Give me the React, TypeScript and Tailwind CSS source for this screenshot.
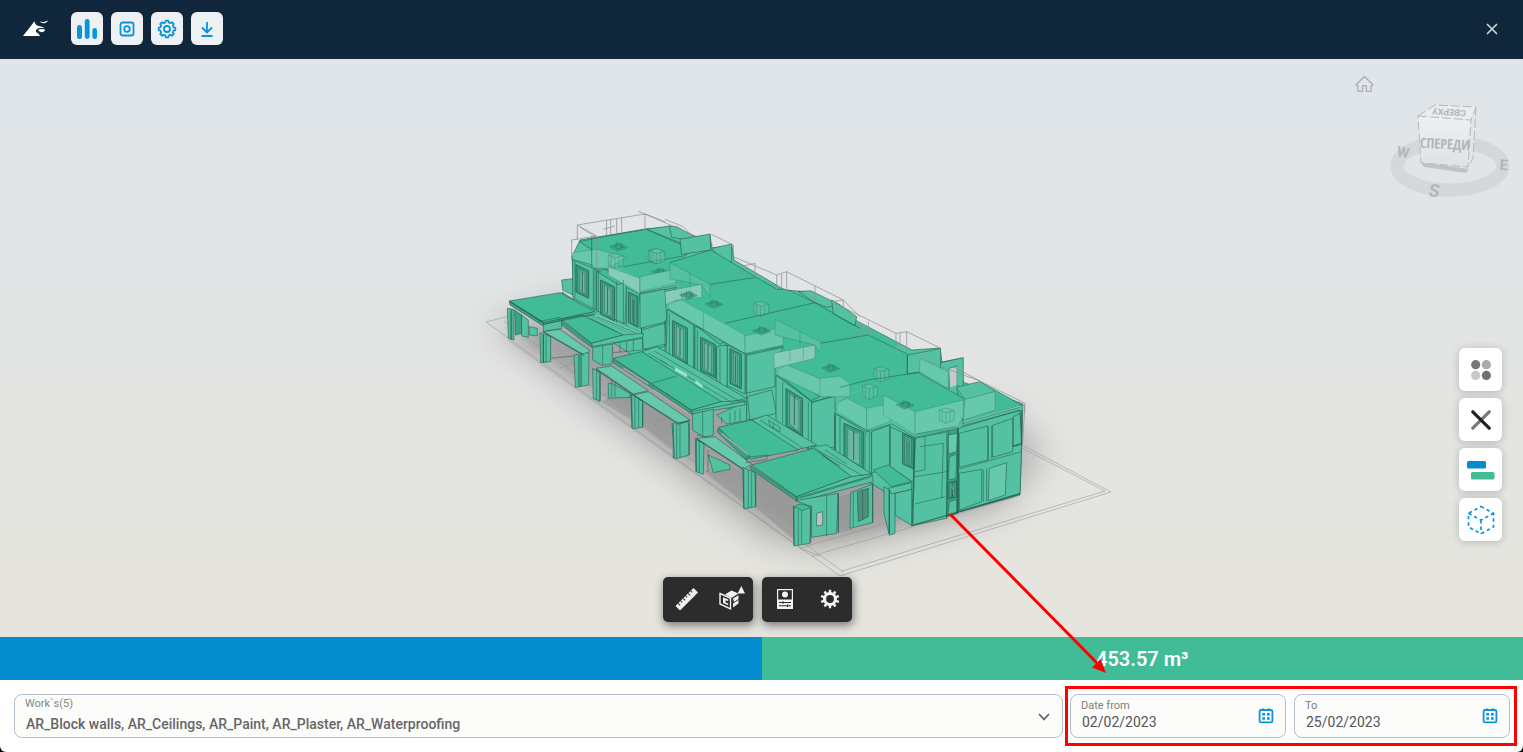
import type { ReactNode } from "react";

const ROOF = "#42bb97";
const WALL = "#54c2a2";
const DEEP = "#38a482";
const GLASS = "#66c8ac";
const PALE = "#86cdb9";
const EDGE = "#22584a";
const WIRE = "#8c9292";

type Shape = [points: string, fill: string];

function Faces({ items, width = 2.6 }: { items: Shape[]; width?: number }) {
  return (
    <g stroke={EDGE} strokeWidth={width} strokeOpacity={0.65} strokeLinejoin="round">
      {items.map(([points, fill]) => (
        <polygon key={points} points={points} fill={fill} />
      ))}
    </g>
  );
}

/* Parapets: light fill with a faint outline */
function Glass({ items }: { items: Shape[] }) {
  return (
    <g stroke={EDGE} strokeWidth="2" strokeOpacity={0.35} strokeLinejoin="round">
      {items.map(([points, fill]) => (
        <polygon key={points} points={points} fill={fill} />
      ))}
    </g>
  );
}

function Lines({ d, color = EDGE, width = 2.4, opacity = 0.65 }: { d: string; color?: string; width?: number; opacity?: number }) {
  return <path d={d} fill="none" stroke={color} strokeWidth={width} strokeOpacity={opacity} strokeLinejoin="round" />;
}

function Win({ x, y, w, h, slope = 0.5 }: { x: number; y: number; w: number; h: number; slope?: number }) {
  const quad = (i: number) =>
    `${x + i},${y + i * 1.4} ${x + w - i},${y + w * slope + i * 0.6} ${x + w - i},${y + h + w * slope - i} ${x + i},${y + h - i * 0.6}`;
  return (
    <g stroke={EDGE} strokeLinejoin="round" strokeOpacity=".8">
      <polygon points={quad(0)} fill={DEEP} strokeWidth="3" />
      <polygon points={quad(6)} fill={WALL} strokeWidth="2" />
      <polygon points={quad(11)} fill="#6bb8a2" strokeWidth="2" />
      <path d={`M${x + w / 2} ${y + 22}v${h - 24}`} strokeWidth="3" />
    </g>
  );
}

function Skylight({ x, y }: { x: number; y: number }) {
  return (
    <g stroke={EDGE} strokeWidth="2" strokeOpacity=".5" fill={DEEP} fillOpacity=".7">
      <polygon points={`${x - 26},${y} ${x + 2},${y - 11} ${x + 27},${y + 2} ${x - 2},${y + 13}`} />
      <path d={`M${x - 14} ${y}l16 -6l14 7l-16 6zM${x - 6} ${y - 14}v14M${x + 10} ${y - 10}v14`} />
    </g>
  );
}

function Chimney({ x, y }: { x: number; y: number }) {
  return (
    <g stroke={EDGE} strokeWidth="2" strokeOpacity=".4" fill={GLASS} fillOpacity=".5">
      <polygon points={`${x},${y} ${x + 20},${y - 6} ${x + 44},${y + 2} ${x + 44},${y + 30} ${x + 20},${y + 40} ${x},${y + 30}`} />
      <path d={`M${x} ${y}l20 8l24 -6M${x + 20} ${y + 8}v32M${x + 8} ${y + 3}v30M${x + 32} ${y + 5}v30`} />
    </g>
  );
}

function Complex() {
  return (
    <svg viewBox="0 59 1523 578" preserveAspectRatio="xMidYMid meet" className="absolute inset-0 h-full w-full" role="img" aria-label="Building model">
      <defs>
        <filter id="soft" x="-30%" y="-30%" width="160%" height="160%">
          <feGaussianBlur stdDeviation="17" />
        </filter>
        <filter id="near" x="-20%" y="-20%" width="140%" height="140%">
          <feGaussianBlur stdDeviation="7" />
        </filter>
      </defs>
      <polygon points="490,325 570,300 760,400 1010,415 1045,455 1000,510 830,552 765,540" fill="#808080" opacity=".5" filter="url(#soft)" />
      <polygon points="510,334 620,330 900,480 1015,490 930,522 805,545 700,468" fill="#808080" opacity=".35" filter="url(#near)" />
      <Lines d="M562 303L486 322L840 576L1111 492L1022 445M504 321L843 572M1022 448L1105 491L842 571M800 548L925 512M812 556L1015 497M508 340L800 548L820 556M560 368L578 362M590 400L625 388M640 425L676 415M700 465L742 452M760 508L800 494" color={WIRE} width={1} opacity={0.5} />

      {/* Main body of the houses */}
      <polygon
        points="572,257 574,300 562,292 562,310 640,360 740,415 850,470 890,495 912,525 1020,495 1023,404 963,382 962,358 942,362 940,348 912,350 840,312 810,292 785,290 734,260 732,246 712,248 710,235 680,240 668,227 645,229 580,240"
        fill={WALL}
        stroke={EDGE}
        strokeWidth="1"
        strokeOpacity=".6"
      />

      {/* Far house */}
      <g transform="translate(480 200) scale(.3333)">
        <Faces items={[
          ["298,125 360,112 500,88 640,150 610,170 430,200 350,158", ROOF],
          ["500,88 568,78 645,110 600,128", WALL],
          ["568,78 590,80 645,110 645,125 575,112", WALL],
          ["278,180 350,208 350,332 278,292", WALL],
          ["350,208 372,204 440,240 435,372 350,332", WALL],
          ["352,215 376,208 438,246 415,254", ROOF],
          ["245,240 278,236 278,285 248,270", WALL],
          ["440,262 480,285 485,402 440,380", WALL],
          ["480,285 590,262 555,310 555,372 485,398", WALL],
          ["490,380 555,365 555,440 495,450", WALL],
        ]} />
        <polygon points="400,195 600,165 690,205 590,218 480,236" fill={ROOF} />
        <Glass items={[
          ["278,158 350,148 440,172 380,205 350,205 278,180", GLASS],
          ["385,200 480,235 480,280 385,225", PALE],
          ["480,235 590,212 600,258 480,280", GLASS],
          ["270,295 350,340 490,400 480,412 340,350 268,312", GLASS],
        ]} />
        <Win x={288} y={194} w={38} h={82} />
        <Win x={362} y={240} w={42} h={102} />
        <Win x={446} y={276} w={28} h={92} />
        <Skylight x={415} y={140} />
        <Skylight x={540} y={216} />
        <Chimney x={505} y={152} />
        <Chimney x={385} y={165} />
        <Lines d="M335 108V200M278 178L340 196M480 290L590 268M355 210V335M340 206V328M345 206V330M410 245V368M430 240V372M285 185V292" />
        <Lines d="M430 200L610 168" />
        <Lines d="M292 75L495 42L640 105L700 134M292 75V120M300 82L350 112V205M495 42V92M275 120L350 108M275 120V180M380 60V108M392 57V105M410 55V100M425 52V95M370 88L405 78M292 75L350 108M385 200L400 165" color={WIRE} width={3} opacity={0.75} />
      </g>

      {/* Middle houses */}
      <g transform="translate(640 220) scale(.3333)">
        <Faces items={[
          ["120,58 210,42 212,90 125,103", WALL],
          ["215,85 275,72 275,128 252,125", WALL],
        ]} />
        <polygon points="80,132 212,90 348,172 525,248 780,372 660,440 540,480 430,430 310,340 130,240" fill={ROOF} />
        <Faces items={[
          ["475,215 512,212 600,255 560,262 525,248", WALL],
          ["575,240 605,258 650,290 645,318 580,282", WALL],
          ["0,222 75,208 80,305 0,325", WALL],
          ["5,330 75,310 80,372 10,388", WALL],
          ["82,268 165,318 162,458 78,412", WALL],
          ["165,318 258,370 255,378 230,385 230,497 165,460", WALL],
          ["170,318 200,316 258,362 240,374", ROOF],
          ["230,380 262,375 262,500 230,495", WALL],
          ["262,375 315,402 315,522 262,497", WALL],
          ["318,406 430,382 405,425 405,500 318,520", WALL],
          ["322,530 395,510 410,580 330,600", WALL],
          ["408,466 515,545 515,690 408,620", WALL],
          ["420,466 440,462 540,530 512,542", ROOF],
          ["515,548 585,528 585,680 515,700", WALL],
        ]} />
        <Glass items={[
          ["0,170 105,148 108,188 0,215", GLASS],
          ["90,128 210,193 210,232 185,195 90,176", "#54c1a1"],
          ["75,215 185,193 185,232 110,240 78,255", PALE],
          ["85,250 125,240 315,345 315,402 85,266", GLASS],
          ["315,348 430,320 430,375 315,400", GLASS],
          ["405,298 552,370 552,420 525,375 405,345", "#54c1a1"],
          ["402,400 525,375 525,415 402,445", PALE],
          ["412,450 440,435 550,480 550,532 412,466", GLASS],
          ["550,482 632,470 632,512 550,532", GLASS],
        ]} />
        <Win x={98} y={302} w={44} h={108} />
        <Win x={182} y={352} w={44} h={100} />
        <Win x={270} y={386} w={34} h={104} />
        <Win x={438} y={506} w={50} h={112} slope={0.6} />
        <Skylight x={222} y={252} />
        <Skylight x={365} y={332} />
        <Skylight x={570} y={446} />
        <Skylight x={145} y={225} />
        <Chimney x={342} y={250} />
        <Chimney x={30} y={92} />
        <Lines d="M90 128L212 90L410 208L440 208L525 248L660 325M210 193L348 172M255 310L525 248M555 375L660 350M85 268L262 372L318 402L430 378M412 466L515 545L585 528M75 300V410M88 280V405M160 318V455M172 330V455M240 385V492M320 400V590M505 545V690M428 485V610M0 218L108 195" />
        <Lines d="M150 160V200M190 280V330M480 335V375M125 215V240M150 208V236M450 390V425M490 382V418" opacity={0.35} />
        <Lines d="M75 -2L130 20L160 52M212 42L280 75V110L410 165V210M410 165L440 155L610 240V265M425 162V205M440 155V205M525 198V246M345 130V178M302 140L345 130M310 150V170M575 245L610 240L660 290M-5 -26L75 5" color={WIRE} width={3} opacity={0.75} />
      </g>

      {/* Near house */}
      <g transform="translate(820 300) scale(.3333)">
        <polygon points="0,132 145,105 262,162 300,220 145,262 60,290 0,220" fill={ROOF} />
        <Faces items={[
          ["262,165 300,158 362,145 362,240 298,216 262,222", WALL],
          ["362,188 430,173 430,262 410,256 410,198 388,205 388,266 362,240", WALL],
          ["410,262 480,245 605,315 430,370 415,300", ROOF],
        ]} />
        <polygon points="388,206 410,200 410,256 390,262" fill="#c3cac7" />
        <polygon points="190,240 295,218 435,298 285,340 145,330 60,300" fill={ROOF} />
        <Faces items={[
          ["45,340 155,400 155,522 45,482", WALL],
          ["155,395 210,375 210,495 155,520", WALL],
          ["210,380 285,415 280,548 210,500", WALL],
          ["285,415 385,395 380,655 275,677", WALL],
          ["385,392 415,385 413,640 380,650", DEEP],
          ["415,385 600,330 605,430 600,580 415,635", WALL],
          ["418,520 485,508 485,605 418,630", WALL],
          ["508,505 560,488 556,585 505,602", GLASS],
          ["418,400 503,378 503,480 418,502", WALL],
          ["518,376 578,355 578,455 518,472", WALL],
          ["580,350 600,340 605,430 580,438", WALL],
          ["385,405 412,400 410,455 385,462", GLASS],
          ["388,470 410,462 408,535 385,540", WALL],
          ["388,605 410,598 410,638 384,645", WALL],
          ["160,510 205,495 275,545 215,560", ROOF],
          ["225,580 275,568 275,677 225,645", WALL],
          ["192,560 208,570 225,580 225,700 208,706 192,640", WALL],
          ["205,565 275,548 275,568 215,582", WALL],
        ]} />
        <Glass items={[
          ["300,175 385,215 385,265 298,216", GLASS],
          ["410,262 480,245 525,275 435,298", WALL],
          ["435,298 525,275 525,330 430,360", GLASS],
          ["0,235 60,228 90,250 90,290 0,290", GLASS],
          ["50,310 80,295 140,325 140,390 50,335", GLASS],
          ["140,325 210,310 210,365 140,390", GLASS],
          ["190,285 285,335 285,405 190,345", GLASS],
          ["285,335 430,300 430,350 410,385 285,405", GLASS],
        ]} />
        <Win x={72} y={370} w={58} h={112} slope={0.45} />
        <Win x={248} y={400} w={32} h={92} slope={0.45} />
        <Win x={384} y={548} w={26} h={48} slope={-0.2} />
        <Skylight x={32} y={204} />
        <Skylight x={255} y={314} />
        <Chimney x={128} y={258} />
        <Chimney x={162} y={206} />
        <Chimney x={358} y={330} />
        <Lines d="M0 130L145 105L262 162M145 240L295 218L435 298M60 262L145 240M262 165V222M285 530L380 515M285 612L375 590M300 440L370 430L365 595M315 410V510L285 515M380 400V655M415 508L605 455M505 380V480M515 376V476M490 508V605M500 506V604M425 370L600 322M425 378L600 332M290 402L410 380M140 395L215 372L285 412L385 392M148 400V520M135 398V512M60 350V480M45 340L140 398M208 570V702M210 380V495M0 455L45 480M0 440L45 465" />
        <Lines d="M414 385V638M285 415L278 672M208 570V700M45 345V480M578 440L605 432V330M275 677L600 582" width={4} opacity={0.7} />
        <Lines d="M430 368L600 318" width={4} color="#a9cfc3" opacity={0.7} />
        <Lines d="M45 10L228 100V150M228 100L260 95L362 145M260 95V150M240 100V148M300 175L430 225L480 243L615 310L608 430M122 70V110M145 65V108M400 200L480 243M606 312L614 316V340" color={WIRE} width={3} opacity={0.75} />
      </g>

      {/* Terraces and carports in front */}
      <g transform="translate(580 340) scale(.3333)">
        <g fill="#8e9190" fillOpacity=".45">
          <polygon points="190,185 275,240 275,330 190,262" />
          <polygon points="85,175 155,165 155,240 62,185" />
          <polygon points="400,380 490,390 490,490 372,395" />
          <polygon points="527,400 640,470 640,600 527,500" />
          <polygon points="775,470 815,460 815,570 775,578" />
        </g>
        <Faces items={[
          ["185,35 230,20 500,175 430,190 290,105", WALL],
          ["515,240 560,225 710,315 640,332", WALL],
          ["700,320 740,315 875,402 815,412", WALL],
          ["410,225 500,185 500,242 440,252", WALL],
          ["100,55 185,35 425,185 335,210", ROOF],
          ["335,210 425,185 495,182 495,195 338,222", WALL],
          ["100,58 335,212 335,222 100,68", DEEP],
          ["338,222 400,208 400,285 372,292 338,270", WALL],
          ["48,85 95,78 205,152 160,162", GLASS],
          ["160,165 205,155 330,240 295,250", GLASS],
          ["95,130 150,160 150,172 85,175 85,130", WALL],
          ["38,85 60,98 60,185 40,175", WALL],
          ["152,160 188,185 188,262 158,267", WALL],
          ["276,250 327,245 328,345 284,357", WALL],
          ["415,262 515,240 655,330 510,358", ROOF],
          ["415,265 510,350 500,360 412,276", DEEP],
          ["350,295 405,290 515,372 490,388", GLASS],
          ["385,345 450,375 450,388 400,398", WALL],
          ["346,295 372,312 370,403 348,395", WALL],
          ["488,382 525,398 527,500 492,507", WALL],
          ["515,375 700,325 815,410 650,470", ROOF],
          ["650,470 815,410 875,402 880,425 655,485", WALL],
          ["512,378 650,472 650,482 512,388", DEEP],
          ["645,482 775,460 770,580 695,592 695,500", WALL],
          ["710,520 728,515 728,555 710,558", "#b9c2be"],
          ["812,458 878,432 878,548 810,565", WALL],
          ["832,455 865,445 865,530 835,545", "#4f8f7c"],
          ["640,500 692,505 690,610 642,618", WALL],
          ["640,500 660,492 695,500 668,512", ROOF],
        ]} />
        <Lines d="M50 90V180M165 168V264M176 176V264M290 252V355M300 250V354M358 300V398M384 330V396M505 390V505M515 395V503M655 510V615M665 512V614M740 465V588M775 460V578M820 455V560M848 450V540M215 130L290 108M425 230V250M450 218V248M465 212V244M480 206V242M368 215V290M205 40L460 190M225 34L480 185M240 60L262 72M350 285L380 290M500 352L565 345L560 358L500 368ZM540 240L670 325M565 240L600 262V275L570 258ZM580 250V266M720 335L850 408M735 330L800 372M725 345L780 378M660 475L870 412M95 120V172M105 125V171" />
        <Lines d="M188 190V262M60 100V183M327 250V345M527 402V500M692 508V608M878 430V548M775 462V578M338 214L495 184M652 474L878 406M160 165L295 252L330 242M350 297L490 388M48 88L160 165M155 165V264M280 252V355M349 298V396M491 388V504M642 503V616" width={4} opacity={0.55} />
        <g fill="#9de8d0">
          <polygon points="285,82 320,102 322,112 285,92" />
          <polygon points="346,120 368,136 368,145 346,130" />
        </g>
        <Lines d="M425 280L505 344M130 84L205 132M220 150L325 220" color="#b9a9a9" width={5} opacity={0.8} />
      </g>
      <g transform="translate(480 200) scale(.3333)">
        <Faces items={[
          ["88,303 240,278 345,335 190,368", ROOF],
          ["88,305 190,368 190,378 90,315", DEEP],
          ["190,368 345,335 345,345 245,362 245,385 190,395", WALL],
          ["245,358 305,345 430,405 335,430", ROOF],
          ["335,430 430,405 490,400 488,412 338,440", WALL],
          ["245,362 335,432 335,442 245,375", DEEP],
          ["190,395 240,388 330,452 312,465", GLASS],
          ["82,325 102,328 102,420 85,415", WALL],
          ["104,330 125,345 125,400 106,405", DEEP],
          ["125,345 145,360 145,412 125,408", WALL],
          ["148,380 172,385 172,408 148,405", WALL],
          ["180,398 212,410 212,485 182,488", WALL],
          ["282,465 327,458 326,555 286,562", WALL],
          ["338,442 398,432 396,492 366,496 338,480", WALL],
        ]} />
        <Lines d="M92 330V418M190 405V487M198 408V486M295 465V560M304 464V559M368 438V494M400 430L488 415V450L400 458M420 428V456M440 424V455M460 420V452M175 365L240 352V362L190 374M212 475L282 468M330 355L410 395M350 350L470 400" />
        <Lines d="M95 328V418M190 403V487M300 464V560M190 372L340 342M190 396L312 466M88 303L190 368" width={4} opacity={0.55} />
      </g>
    </svg>
  );
}

function ViewCube() {
  return (
    <svg viewBox="0 0 126 106" className="absolute top-[37px] right-[10px] h-[106px] w-[126px]" role="img" aria-label="View cube">
      <defs>
        <linearGradient id="cube" x1="0" y1="0" x2="0" y2="1">
          <stop offset="0" stopColor="#eef0f2" />
          <stop offset="1" stopColor="#dfe2e4" />
        </linearGradient>
      </defs>
      <ellipse cx="63" cy="70" rx="53" ry="24" fill="none" stroke="#d4d8da" strokeWidth="13" />
      <path d="M34 66L82 73L79 77L37 71Z" fill="#bfc3c5" />
      <path d="M31 20L48 9L89 11L84 24Z" fill="#eaedef" />
      <path d="M84 24L89 11L86 62L81 71Z" fill="#e3e6e8" />
      <path d="M31 20L84 24L81 71L34 67Z" fill="url(#cube)" />
      <path d="M31 20L84 24L81 71L34 67ZM31 20L48 9L89 11L84 24M89 11L86 62L81 71" fill="none" stroke="#b4b9bd" strokeWidth="1" strokeDasharray="9 3" />
      <g fontFamily="Roboto, sans-serif" fontWeight="700" fill="#b2b6b9" textAnchor="middle">
        <text x="58" y="53" fontSize="14" fontFamily="'Liberation Sans Narrow', 'Open Sans Condensed', Roboto, sans-serif" transform="rotate(3 58 48)">СПЕРЕДИ</text>
        <text x="62" y="17" fontSize="9" transform="rotate(184 62 15)">СВЕРХУ</text>
        <text x="16" y="61" fontSize="14" transform="rotate(10 16 57)">W</text>
        <text x="47" y="101" fontSize="18" fontStyle="italic">S</text>
        <text x="117" y="74" fontSize="15" transform="rotate(4 117 68)">E</text>
      </g>
    </svg>
  );
}

function HeaderButton({ label, children }: { label: string; children: ReactNode }) {
  return (
    <button type="button" aria-label={label} className="flex h-[33px] w-8 items-center justify-center rounded-md bg-[#edf1f4] text-[#0a94dc]">
      {children}
    </button>
  );
}

function SideButton({ label, children }: { label: string; children: ReactNode }) {
  return (
    <button type="button" aria-label={label} className="flex size-[43px] items-center justify-center rounded-md bg-white shadow-[0_1px_8px_rgba(0,0,0,0.2)]">
      {children}
    </button>
  );
}

function GearPath({ r, R, n, foot = 0.58, tip = 0.35 }: { r: number; R: number; n: number; foot?: number; tip?: number }) {
  const pts: string[] = [];
  for (let i = 0; i < n; i++) {
    const a = (i / n) * Math.PI * 2 - Math.PI / 2;
    const s = Math.PI / n;
    for (const [da, rad] of [[-foot * s, r], [-tip * s, R], [tip * s, R], [foot * s, r]]) {
      pts.push(`${(10 + Math.cos(a + da) * rad).toFixed(2)} ${(10 + Math.sin(a + da) * rad).toFixed(2)}`);
    }
  }
  return <path d={`M${pts.join("L")}Z`} />;
}

function CalendarIcon() {
  return (
    <svg viewBox="0 0 16 16" className="size-4" aria-hidden="true">
      <rect x="1.6" y="2" width="12.8" height="12.4" rx="1.5" fill="none" stroke="#0a94dc" strokeWidth="1.8" />
      <path d="M4 .5h2v2H4zM10 .5h2v2h-2zM4.3 5h2.7v2.5H4.3zM9 5h2.7v2.5H9zM4.3 9.3h2.7v2.5H4.3zM9 9.3h2.7v2.5H9z" fill="#0a94dc" />
    </svg>
  );
}

function DateField({ id, label, value }: { id: string; label: string; value: string }) {
  return (
    <div className="flex h-11 w-[216px] items-center rounded-lg border border-[#b3bfcc] bg-[#fcfcfa] pr-[11px] pl-[10px]">
      <div className="min-w-0 flex-1 pb-1">
        <label htmlFor={id} className="block h-4 text-[11px] leading-4 text-[#7d7d7d]">{label}</label>
        <input id={id} type="text" defaultValue={value} className="block h-4 w-full bg-transparent pl-px text-sm leading-4 text-[#555] outline-none" />
      </div>
      <button type="button" aria-label={`Choose ${label}`}><CalendarIcon /></button>
    </div>
  );
}

export default function App() {
  return (
    <div className="bg-black font-['Roboto',sans-serif]">
      <div className="relative flex min-h-screen flex-col overflow-hidden rounded-b-md bg-white">
        <header className="flex h-[59px] shrink-0 items-center bg-[#10263a] pr-6 pb-[2px] pl-[23px]">
          <svg viewBox="0 0 26 17" className="mr-[22px] h-[17px] w-[26px]" fill="white" aria-hidden="true">
            <path d="M0 16L11.5 1.2C12 3 12.5 4.5 14.2 5.4C16 6.2 19.5 6 22 8.4C19 7.6 15.5 7.8 13.8 9.2C12.3 10.5 12.6 12.5 15.5 13.4L17 16Z" />
            <path d="M16.8 1.3C17.8 1.8 19.2 2.1 20.8 1.9L25.4 .4C24 1.8 22.8 2.9 21.3 3.2C19.6 3.5 17.7 2.8 16.8 1.3ZM15 10C17 8.8 20 8.8 22.2 9.8L20.8 11.8C18.8 12.6 16 12 15 10Z" />
          </svg>
          <div className="flex gap-2">
            <HeaderButton label="Charts">
              <svg viewBox="0 0 20 20" className="size-5" fill="currentColor">
                <rect x="0" y="6" width="5" height="14" rx="2.5" />
                <rect x="7.8" y="0" width="4.8" height="20" rx="2.4" />
                <rect x="15.4" y="9" width="4.6" height="11" rx="2.3" />
              </svg>
            </HeaderButton>
            <HeaderButton label="Snapshot">
              <svg viewBox="0 0 16 16" className="size-4" fill="none" stroke="currentColor" strokeWidth="1.8">
                <rect x="1.5" y="1.5" width="13" height="13" rx="2" />
                <circle cx="8" cy="8" r="2.8" />
              </svg>
            </HeaderButton>
            <HeaderButton label="Settings">
              <svg viewBox="0 0 20 20" className="size-5" fill="none" stroke="currentColor" strokeWidth="1.8" strokeLinejoin="round">
                <GearPath r={6.8} R={8.4} n={8} foot={0.62} tip={0.4} />
                <circle cx="10" cy="10" r="3" />
              </svg>
            </HeaderButton>
            <HeaderButton label="Download">
              <svg viewBox="0 0 16 16" className="size-4" fill="none" stroke="currentColor" strokeWidth="1.8">
                <path d="M8 1V11M3 6.5L8 11.4L13 6.5M2.5 15H13.5" />
              </svg>
            </HeaderButton>
          </div>
          <button type="button" aria-label="Close" className="ml-auto text-[#ccd3d9]">
            <svg viewBox="0 0 14 14" className="size-[14px]" stroke="currentColor" strokeWidth="1.7">
              <path d="M2 2L12 12M12 2L2 12" />
            </svg>
          </button>
        </header>

        <main className="relative min-h-[578px] flex-1 bg-linear-to-b from-[#dfe5ea] to-[#e6e4dd]">
          <Complex />
          <button type="button" aria-label="Home view" className="absolute top-4 right-[149px]">
            <svg viewBox="0 0 19 18" className="h-[18px] w-[19px]" fill="none" stroke="#aaafb3" strokeWidth="1.3" strokeLinejoin="round">
              <path d="M9.5 1.5L1 9.8L2 10.8H3V16.3H7.5V10.6H11.3V16.3H16V10.8H17L18 9.8Z" />
            </svg>
          </button>
          <ViewCube />

          <div className="absolute top-[289px] right-[21px] flex flex-col gap-[7px]">
            <SideButton label="Groups">
              <svg viewBox="0 0 20 20" className="size-5">
                <circle cx="4.7" cy="4.7" r="4.6" fill="#777" />
                <circle cx="15.4" cy="4.7" r="4.6" fill="#aaa" />
                <circle cx="4.7" cy="15.4" r="4.6" fill="#c8c8c8" />
                <circle cx="15.4" cy="15.4" r="4.6" fill="#707070" />
              </svg>
            </SideButton>
            <SideButton label="Clear">
              <svg viewBox="0 0 20 20" className="size-5" strokeWidth="3.2" strokeLinecap="round">
                <path d="M18.2 1.8L1.8 18.2" stroke="#777" />
                <path d="M1.8 1.8L18.2 18.2" stroke="#222" />
              </svg>
            </SideButton>
            <SideButton label="Compare">
              <svg viewBox="0 0 28 20" className="h-5 w-7">
                <rect x="0" y="1" width="19" height="7.5" rx="1.5" fill="#058ccf" />
                <rect x="4" y="12" width="23.5" height="7.5" rx="1.5" fill="#42bb97" />
              </svg>
            </SideButton>
            <SideButton label="Model outline">
              <svg viewBox="0 0 28 30" className="h-[30px] w-7" fill="none" stroke="#0a94dc" strokeWidth="1.7" strokeDasharray="3.4 3">
                <path d="M14 1.5L26.5 8.3V22L14 28.7L1.5 22V8.3ZM1.5 8.3L14 15.2L26.5 8.3M14 15.2V28.7" />
              </svg>
            </SideButton>
          </div>

          <div className="absolute inset-x-0 bottom-[15px] flex justify-center gap-[9px] pr-2 text-[#f2f2f2]">
            <div className="flex h-[45px] w-[90px] rounded-[5px] bg-[#2c2c2c] pb-[2px] shadow-[1px_3px_10px_rgba(0,0,0,0.5)]">
              <button type="button" aria-label="Measure" className="flex flex-1 items-center justify-center">
                <svg viewBox="0 0 24 24" className="size-6">
                  <path d="M1.5 19L19.5 1L24 5.5L6 23.5Z" fill="currentColor" />
                  <path d="M4.2 16.4l2 2M6.7 13.9l1.4 1.4M9.2 11.4l2 2M11.7 8.9l1.4 1.4M14.2 6.4l2 2M16.7 3.9l1.4 1.4" stroke="#2c2c2c" strokeWidth="1.1" />
                </svg>
              </button>
              <button type="button" aria-label="Section" className="flex flex-1 items-center justify-center">
                <svg viewBox="0 0 28 26" className="h-[26px] w-7">
                  <path d="M8 8.5L14.5 4.5L21.5 7.5L14.5 12ZM16 12.6L21.5 9.2V13L17 16ZM16 17.5L21.5 14V17.5L16 21.5Z" fill="currentColor" />
                  <path d="M3 7.5L13.5 12.3V23L3 18Z" fill="#2c2c2c" stroke="currentColor" strokeWidth="1.4" />
                  <path d="M6 11.2L11.2 13.6V15.2L8.6 14.3V16.4L11.2 17.6V19.2L6 17Z" fill="currentColor" />
                  <path d="M24.3 0L28 7.5H20.6Z" fill="currentColor" />
                </svg>
              </button>
            </div>
            <div className="flex h-[45px] w-[90px] rounded-[5px] bg-[#2c2c2c] pb-[2px] shadow-[1px_3px_10px_rgba(0,0,0,0.5)]">
              <button type="button" aria-label="Properties" className="flex flex-1 items-center justify-center">
                <svg viewBox="0 0 16 20" className="h-5 w-4">
                  <rect width="16" height="20" fill="currentColor" />
                  <rect x="1.2" y="1.2" width="13.6" height="9.3" fill="#2c2c2c" />
                  <circle cx="8" cy="5.5" r="3" fill="currentColor" />
                  <path d="M2 13.5H14M2 16.7H14M6 12.2V14.8M10.5 15.4V18" stroke="#2c2c2c" strokeWidth="1.1" />
                </svg>
              </button>
              <button type="button" aria-label="Viewer settings" className="flex flex-1 items-center justify-center">
                <svg viewBox="0 0 20 20" className="size-5" fill="currentColor">
                  <GearPath r={7} R={9.4} n={10} foot={0.55} tip={0.4} />
                  <circle cx="10" cy="10" r="3.9" fill="#2c2c2c" />
                </svg>
              </button>
            </div>
          </div>
        </main>

        <div className="grid h-[43px] shrink-0 grid-cols-2 text-xl font-semibold text-white">
          <div className="bg-[#058ccf]" />
          <div className="flex items-center justify-center bg-[#42bb97]">453.57 m³</div>
        </div>

        <footer className="flex shrink-0 items-center gap-[2px] pt-[6px] pr-[6px] pb-[6px] pl-[14px]">
          <div className="relative flex h-11 min-w-0 flex-1 flex-col rounded-lg border border-[#b3bfcc] bg-[#fcfcfa] px-[10px] pt-px">
            <label htmlFor="works" className="block h-4 text-[11px] leading-4 text-[#858585]">Work`s(5)</label>
            <select id="works" className="block h-6 w-full appearance-none bg-transparent pl-px text-sm font-medium text-[#666] outline-none">
              <option>AR_Block walls, AR_Ceilings, AR_Paint, AR_Plaster, AR_Waterproofing</option>
            </select>
            <svg viewBox="0 0 12 8" className="pointer-events-none absolute top-[18px] right-3 h-2 w-3" fill="none" stroke="#666" strokeWidth="1.7" aria-hidden="true">
              <path d="M1 1L6 6.4L11 1" />
            </svg>
          </div>
          <div className="flex gap-2 border-[3px] border-[#ff0000] pt-[5px] pr-1 pb-[5px] pl-[2px]">
            <DateField id="date-from" label="Date from" value="02/02/2023" />
            <DateField id="date-to" label="To" value="25/02/2023" />
          </div>
        </footer>

        <svg viewBox="0 0 160 164" className="pointer-events-none absolute right-[415px] bottom-[78px] h-[164px] w-[160px]" aria-hidden="true">
          <path d="M3 5L148 152" stroke="#ff0000" strokeWidth="3" strokeLinecap="round" />
          <path d="M158 163L144 157.5L152.5 149Z" fill="#ff0000" />
        </svg>
      </div>
    </div>
  );
}
